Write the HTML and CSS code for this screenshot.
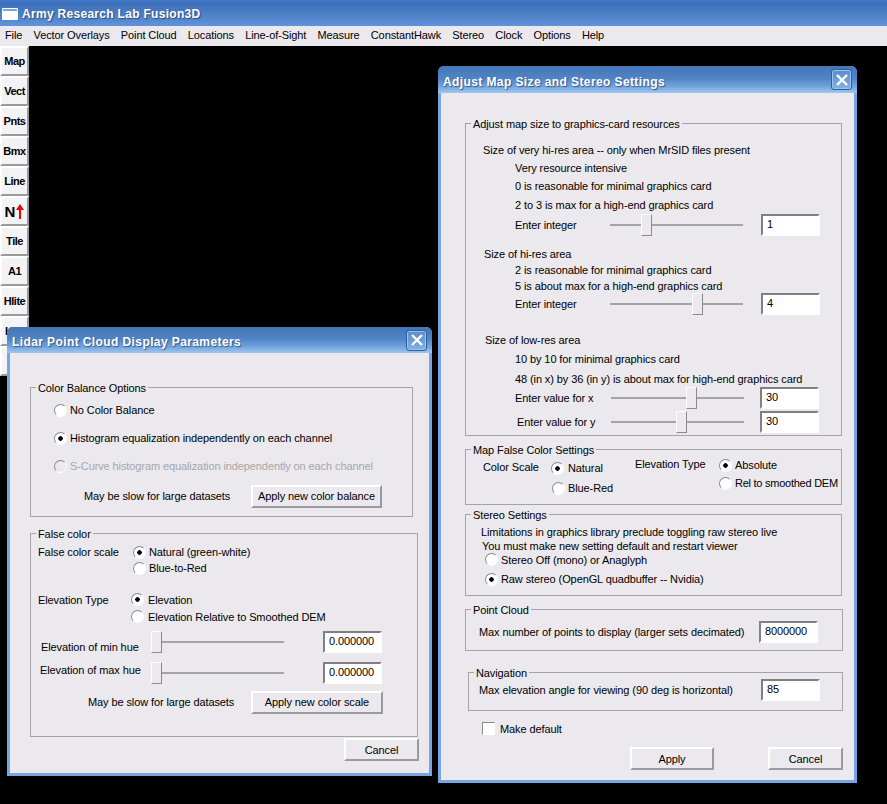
FILE: index.html
```html
<!DOCTYPE html>
<html lang="en">
<head>
  <meta charset="UTF-8">
  <title>Army Research Lab Fusion3D</title>
  <link rel="stylesheet" href="styles.css">
</head>
<body>

  <div class="app">
    <div class="app-title">
      <svg class="app-icon" width="16" height="12" viewBox="0 0 16 12"><rect width="16" height="12" rx="1" fill="#fff"/><rect x="1" y="1" width="14" height="2" fill="#7fa6dc"/></svg>
      <span>Army Research Lab Fusion3D</span>
    </div>
    <div class="menubar">
      <span>File</span><span>Vector Overlays</span><span>Point Cloud</span><span>Locations</span><span>Line-of-Sight</span><span>Measure</span><span>ConstantHawk</span><span>Stereo</span><span>Clock</span><span>Options</span><span>Help</span>
    </div>
    <div class="toolbar">
      <button class="tool">Map</button>
      <button class="tool">Vect</button>
      <button class="tool">Pnts</button>
      <button class="tool">Bmx</button>
      <button class="tool">Line</button>
      <button class="tool tool-north">N<svg width="8" height="15" viewBox="0 0 8 15"><path d="M4 0 L8 6 L5 6 L5 15 L3 15 L3 6 L0 6 Z" fill="#f00000"/></svg></button>
      <button class="tool">Tile</button>
      <button class="tool">A1</button>
      <button class="tool">Hlite</button>
      <button class="tool tool-left">K</button>
      <button class="tool"></button>
    </div>
  </div>

  <!-- Lidar dialog -->
  <div class="dialog dialog-lidar">
    <div class="dialog-title">
      <span>Lidar Point Cloud Display Parameters</span>
      <button class="close"><svg width="12" height="12" viewBox="0 0 12 12"><path d="M1 1 L11 11 M11 1 L1 11" stroke="#fff" stroke-width="2.4"/></svg></button>
    </div>
    <div class="dialog-body lidar-body">
      <fieldset class="w383">
        <legend>Color Balance Options</legend>
        <label class="row h32 in23"><input type="radio" name="bal"><span>No Color Balance</span></label>
        <label class="row h24 in23"><input type="radio" name="bal" checked><span>Histogram equalization independently on each channel</span></label>
        <label class="row h32 in23 disabled"><input type="radio" name="bal" disabled><span>S-Curve histogram equalization independently on each channel</span></label>
        <div class="row h28 in53 pb6box">
          <span class="w167">May be slow for large datasets</span>
          <button class="btn w131">Apply new color balance</button>
        </div>
      </fieldset>

      <fieldset class="w388 mt9 pt4 pb23">
        <legend>False color</legend>
        <div class="row h16 in7"><span class="w95">False color scale</span><label class="opt"><input type="radio" name="scale" checked><span>Natural (green-white)</span></label></div>
        <div class="row h16 in102"><label class="opt"><input type="radio" name="scale"><span>Blue-to-Red</span></label></div>
        <div class="row h17 in7 mt15"><span class="w93">Elevation Type</span><label class="opt opt-gap"><input type="radio" name="etype" checked><span>Elevation</span></label></div>
        <div class="row h17 in100"><label class="opt opt-gap"><input type="radio" name="etype"><span>Elevation Relative to Smoothed DEM</span></label></div>
        <div class="row h23 in10 mt5">
          <span class="w110 lower">Elevation of min hue</span>
          <input type="range" class="slider" min="0" max="122" value="0">
          <input type="text" class="field ml39" value="0.000000">
        </div>
        <div class="row h23 in9 mt8">
          <span class="w111 upper">Elevation of max hue</span>
          <input type="range" class="slider" min="0" max="122" value="0">
          <input type="text" class="field ml39" value="0.000000">
        </div>
        <div class="row h22 in57 mt7">
          <span class="w163">May be slow for large datasets</span>
          <button class="btn w132">Apply new color scale</button>
        </div>
      </fieldset>

      <div class="actions mt1 pr10">
        <button class="btn w75">Cancel</button>
      </div>
    </div>
  </div>

  <!-- Map size dialog -->
  <div class="dialog dialog-map">
    <div class="dialog-title title-tall">
      <span>Adjust Map Size and Stereo Settings</span>
      <button class="close"><svg width="12" height="12" viewBox="0 0 12 12"><path d="M1 1 L11 11 M11 1 L1 11" stroke="#fff" stroke-width="2.4"/></svg></button>
    </div>
    <div class="dialog-body map-body">
      <fieldset class="w377 pt11 pb2">
        <legend>Adjust map size to graphics-card resources</legend>
        <div class="row h18 in17">Size of very hi-res area -- only when MrSID files present</div>
        <div class="row h18 in49">Very resource intensive</div>
        <div class="row h18 in49">0 is reasonable for minimal graphics card</div>
        <div class="row h19 in49">2 to 3 is max for a high-end graphics card</div>
        <div class="row h21 in49">
          <span class="w95">Enter integer</span>
          <input type="range" class="slider" min="0" max="122" value="31">
          <input type="text" class="field ml18" value="1">
        </div>
        <div class="row h16 in18 mt11">Size of hi-res area</div>
        <div class="row h16 in49">2 is reasonable for minimal graphics card</div>
        <div class="row h15 in49">5 is about max for a high-end graphics card</div>
        <div class="row h22 in49">
          <span class="w95">Enter integer</span>
          <input type="range" class="slider" min="0" max="122" value="82">
          <input type="text" class="field ml18" value="4">
        </div>
        <div class="row h16 in19 mt17">Size of low-res area</div>
        <div class="row h16 in49 mt3">10 by 10 for minimal graphics card</div>
        <div class="row h16 in49 mt4">48 (in x) by 36 (in y) is about max for high-end graphics card</div>
        <div class="row h22 in49">
          <span class="w96">Enter value for x</span>
          <input type="range" class="slider" min="0" max="122" value="75">
          <input type="text" class="field ml16" value="30">
        </div>
        <div class="row h22 in51 mt2">
          <span class="w94">Enter value for y</span>
          <input type="range" class="slider" min="0" max="122" value="65">
          <input type="text" class="field ml16" value="30">
        </div>
      </fieldset>

      <fieldset class="w377 mt6">
        <legend>Map False Color Settings</legend>
        <div class="cols">
          <span class="w68 in17 pt5">Color Scale</span>
          <div class="optcol gap4 pt4 w84">
            <label class="opt opt-gap"><input type="radio" name="mscale" checked><span>Natural</span></label>
            <label class="opt opt-in"><input type="radio" name="mscale"><span>Blue-Red</span></label>
          </div>
          <span class="w84 pt2">Elevation Type</span>
          <div class="optcol gap2 pt1">
            <label class="opt"><input type="radio" name="mtype" checked><span>Absolute</span></label>
            <label class="opt tight"><input type="radio" name="mtype"><span>Rel to smoothed DEM</span></label>
          </div>
        </div>
      </fieldset>

      <fieldset class="w377 mt2 pt4 pb8">
        <legend>Stereo Settings</legend>
        <div class="row h14 in15">Limitations in graphics library preclude toggling raw stereo live</div>
        <div class="row h13 in16">You must make new setting default and restart viewer</div>
        <label class="row h15 in19"><input type="radio" name="stereo"><span>Stereo Off (mono) or Anaglyph</span></label>
        <label class="row h16 in19 mt4"><input type="radio" name="stereo" checked><span>Raw stereo (OpenGL quadbuffer -- Nvidia)</span></label>
      </fieldset>

      <fieldset class="w378 mt6 pt5 pb7">
        <legend>Point Cloud</legend>
        <div class="row h22 in13"><span class="w280">Max number of points to display (larger sets decimated)</span><input type="text" class="field" value="8000000"></div>
      </fieldset>

      <fieldset class="w375 ml3 mt14 pb10">
        <legend>Navigation</legend>
        <div class="row h21 in10"><span class="w282">Max elevation angle for viewing (90 deg is horizontal)</span><input type="text" class="field" value="85"></div>
      </fieldset>

      <label class="row h13 check-row mt11"><input type="checkbox"><span>Make default</span></label>

      <div class="actions mt12 pr11 gap54">
        <button class="btn w84">Apply</button>
        <button class="btn w75">Cancel</button>
      </div>
    </div>
  </div>

</body>
</html>
```

FILE: styles.css
```css
body {
  margin: 0;
  height: 804px;
  overflow: hidden;
  background-color: #000;
  font-family: "Liberation Sans", Arial, sans-serif;
  font-size: 11px;
  letter-spacing: -0.1px;
  white-space: nowrap;
  color: #000;
  position: relative;
}

.app-title {
  height: 25px;
  display: flex;
  align-items: center;
  padding: 1px 0 0 2px;
  background: linear-gradient(#3f79cf 0, #3d6fb8 12%, #4a7dc2 50%, #6193da 100%);
  color: #fff;
  font-size: 12px;
  font-weight: bold;
  letter-spacing: 0.3px;
  text-shadow: 1px 1px 1px #2a4a80;
}

.app-icon {
  margin-right: 4px;
}

.menubar {
  box-sizing: border-box;
  height: 20px;
  display: flex;
  align-items: center;
  gap: 11.2px;
  padding: 0 0 2px 5px;
  background-color: #ebe9ed;
}

.toolbar {
  width: 29px;
  display: flex;
  flex-direction: column;
}

.tool {
  width: 29px;
  height: 30px;
  padding: 0;
  background-color: #f3f2f5;
  border: 2px solid;
  border-color: #fff #9a9a9e #9a9a9e #fff;
  font-family: "Liberation Sans", Arial, sans-serif;
  font-size: 11px;
  font-weight: bold;
  letter-spacing: -0.5px;
  color: #000;
}

.tool-north {
  font-size: 15px;
  letter-spacing: 0;
  display: flex;
  align-items: center;
  justify-content: center;
  gap: 1px;
}

.tool-left {
  text-align: left;
  padding-left: 3px;
}

/* dialogs sit on the desktop */
.dialog {
  position: absolute;
  box-sizing: border-box;
  background-color: #ebe9ed;
  border: 3px solid #74a6e4;
  border-top: 0;
  border-radius: 6px 6px 0 0;
}

.dialog-lidar {
  left: 7px;
  top: 327px;
  width: 425px;
  height: 449px;
}

.dialog-map {
  left: 438px;
  top: 66px;
  width: 419px;
  height: 717px;
}

.dialog-title {
  box-sizing: border-box;
  height: 26px;
  margin: 0 -3px;
  padding: 0 5px 0 5px;
  display: flex;
  align-items: center;
  justify-content: space-between;
  border-radius: 6px 6px 0 0;
  background: linear-gradient(#4477b8 0, #4f83c4 45%, #6fa3de 75%, #a2c6ec 100%);
  color: #fff;
  font-size: 12px;
  font-weight: bold;
  letter-spacing: 0.4px;
  text-shadow: 1px 1px 1px #33558c;
}

.dialog-title span {
  padding-top: 4px;
}

.title-tall {
  height: 27px;
}

.close {
  width: 21px;
  height: 21px;
  padding: 0;
  display: flex;
  align-items: center;
  justify-content: center;
  background: linear-gradient(#5a8ccc, #80b0e6);
  border: 1px solid #2f5f9e;
  border-radius: 3px;
  box-shadow: inset 0 0 0 1px #9cc2ea;
}

.lidar-body {
  padding: 27px 0 0 20px;
}

.map-body {
  padding: 23px 0 0 24px;
}

fieldset {
  box-sizing: border-box;
  margin: 0;
  padding: 0;
  min-width: 0;
  border: 1px solid #a3a3a8;
}

legend {
  margin-left: 5px;
  padding: 2px 2px 0;
  line-height: 12px;
}

.row {
  display: flex;
  align-items: center;
}

.cols {
  display: flex;
  height: 48px;
}

.optcol {
  display: flex;
  flex-direction: column;
}

.opt {
  display: flex;
  align-items: center;
  height: 16px;
}

.opt-in {
  margin-left: 1px;
}

.opt-gap input[type="radio"] {
  margin-right: 4px;
}

.tight {
  letter-spacing: -0.25px;
}

.disabled {
  color: #a6a6aa;
}

.actions {
  display: flex;
  justify-content: flex-end;
}

.lower {
  padding-top: 11px;
}

.upper {
  padding-bottom: 5px;
}

.check-row {
  margin-left: 17px;
}

input[type="radio"], input[type="checkbox"] {
  appearance: none;
  box-sizing: border-box;
  flex: none;
  margin: 0 3px 0 0;
  width: 13px;
  height: 13px;
  border: 1px solid;
  border-color: #8a8a8e #fff #fff #8a8a8e;
  background-color: #fff;
}

input[type="radio"] {
  border-radius: 50%;
}

input[type="radio"]:checked {
  background: radial-gradient(circle, #000 0, #000 2px, #fff 2.5px);
}

input[type="radio"]:disabled {
  background-color: #ebe9ed;
}

input[type="checkbox"] {
  margin-right: 5px;
}

.field {
  box-sizing: border-box;
  flex: none;
  width: 59px;
  height: 22px;
  padding: 0 0 2px 4px;
  border: 2px solid;
  border-color: #808084 #fff #fff #808084;
  background-color: #fff;
  font-family: inherit;
  font-size: 11px;
  letter-spacing: inherit;
  color: #000;
  outline: 0;
}

.btn {
  box-sizing: border-box;
  height: 23px;
  padding: 0;
  background-color: #ebe9ed;
  border: 2px solid;
  border-color: #fff #9a9a9e #9a9a9e #fff;
  font-family: inherit;
  font-size: 11px;
  letter-spacing: inherit;
  color: #000;
}

.slider {
  appearance: none;
  flex: none;
  margin: 0;
  width: 133px;
  height: 22px;
  background: transparent;
}

.slider::-webkit-slider-runnable-track {
  height: 2px;
  background-color: #a3a3a8;
}

.slider::-webkit-slider-thumb {
  appearance: none;
  box-sizing: border-box;
  width: 11px;
  height: 22px;
  margin-top: -10px;
  background-color: #ebe9ed;
  border: 1px solid;
  border-color: #fff #8a8a8e #8a8a8e #fff;
}

/* row heights */
.h13 { height: 13px; }
.h14 { height: 14px; }
.h15 { height: 15px; }
.h16 { height: 16px; }
.h17 { height: 17px; }
.h18 { height: 18px; }
.h19 { height: 19px; }
.h21 { height: 21px; }
.h22 { height: 22px; }
.h23 { height: 23px; }
.h24 { height: 24px; }
.h28 { height: 28px; }
.h32 { height: 32px; }

/* indents */
.in7 { padding-left: 7px; }
.in9 { padding-left: 9px; }
.in10 { padding-left: 10px; }
.in13 { padding-left: 13px; }
.in15 { padding-left: 15px; }
.in16 { padding-left: 16px; }
.in17 { padding-left: 17px; }
.in18 { padding-left: 18px; }
.in19 { padding-left: 19px; }
.in23 { padding-left: 23px; }
.in49 { padding-left: 49px; }
.in51 { padding-left: 51px; }
.in53 { padding-left: 53px; }
.in57 { padding-left: 57px; }
.in100 { padding-left: 100px; }
.in102 { padding-left: 102px; }

/* widths */
.w68 { width: 68px; }
.w75 { width: 75px; }
.w84 { width: 84px; flex: none; }
.w93 { width: 93px; flex: none; }
.w94 { width: 94px; flex: none; }
.w95 { width: 95px; flex: none; }
.w96 { width: 96px; flex: none; }
.w110 { width: 110px; flex: none; }
.w111 { width: 111px; flex: none; }
.w131 { width: 131px; }
.w132 { width: 132px; }
.w163 { width: 163px; flex: none; }
.w167 { width: 167px; flex: none; }
.w280 { width: 280px; flex: none; }
.w282 { width: 282px; flex: none; }
.w375 { width: 375px; }
.w377 { width: 377px; }
.w378 { width: 378px; }
.w383 { width: 383px; }
.w388 { width: 388px; }

/* spacing */
.mt1 { margin-top: 1px; }
.mt2 { margin-top: 2px; }
.mt3 { margin-top: 3px; }
.mt4 { margin-top: 4px; }
.mt5 { margin-top: 5px; }
.mt6 { margin-top: 6px; }
.mt7 { margin-top: 7px; }
.mt8 { margin-top: 8px; }
.mt9 { margin-top: 9px; }
.mt11 { margin-top: 11px; }
.mt12 { margin-top: 12px; }
.mt14 { margin-top: 14px; }
.mt15 { margin-top: 15px; }
.mt17 { margin-top: 17px; }
.ml3 { margin-left: 3px; }
.ml16 { margin-left: 16px; }
.ml18 { margin-left: 18px; }
.ml39 { margin-left: 39px; }
.pt1 { padding-top: 1px; }
.pt2 { padding-top: 2px; }
.pt4 { padding-top: 4px; }
.pt5 { padding-top: 5px; }
.pt11 { padding-top: 11px; }
.pb2 { padding-bottom: 2px; }
.pb6box { margin-bottom: 6px; }
.pb7 { padding-bottom: 7px; }
.pb8 { padding-bottom: 8px; }
.pb10 { padding-bottom: 10px; }
.pb23 { padding-bottom: 23px; }
.pr10 { padding-right: 10px; }
.pr11 { padding-right: 11px; }
.gap2 { gap: 2px; }
.gap4 { gap: 4px; }
.gap54 { gap: 54px; }
```
